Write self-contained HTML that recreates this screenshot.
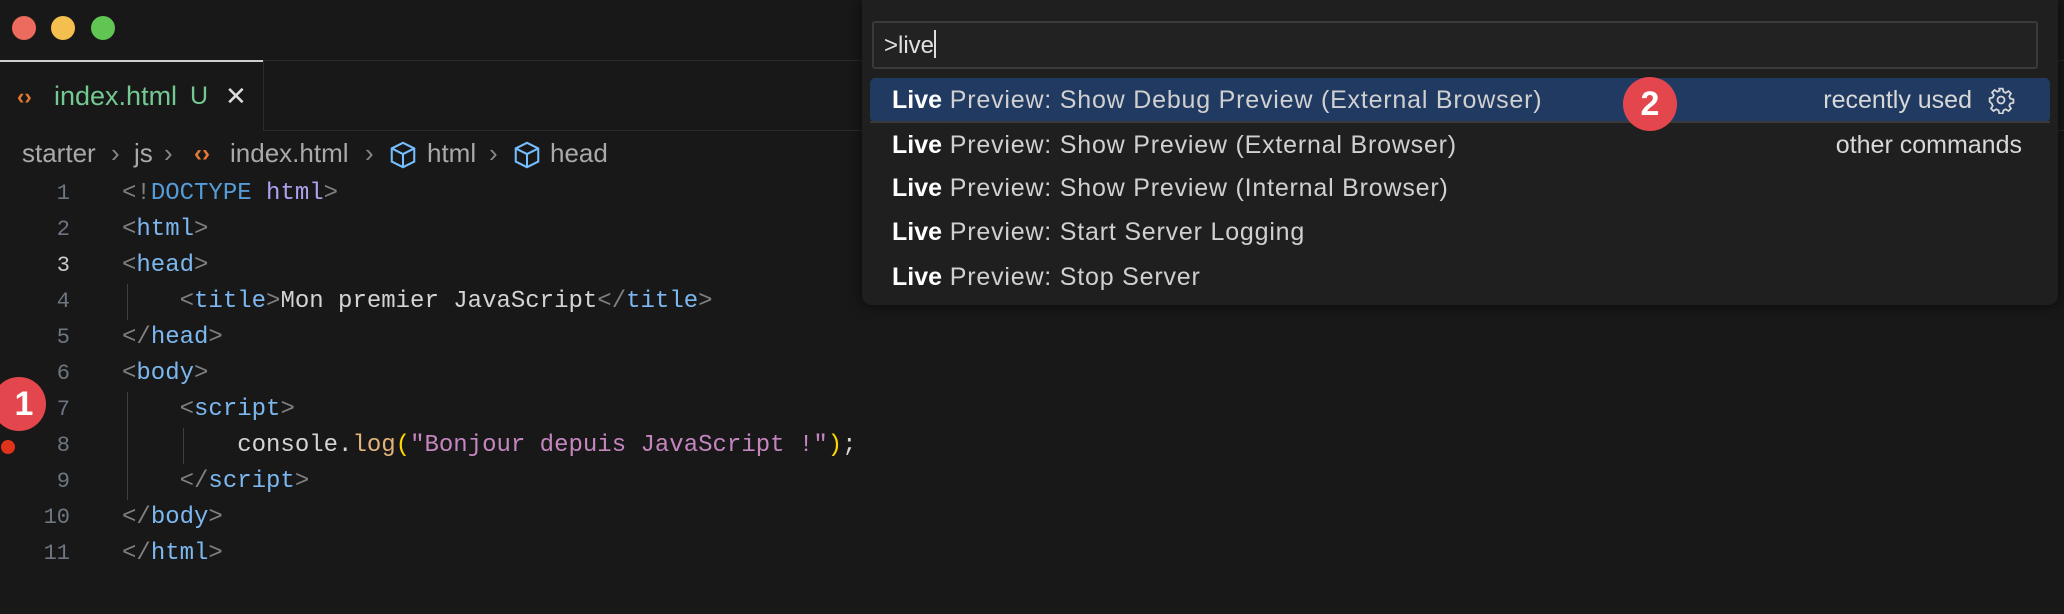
<!DOCTYPE html>
<html><head><style>
*{margin:0;padding:0;box-sizing:border-box}
body{width:2064px;height:614px;background:#181818;position:relative;overflow:hidden;font-family:"Liberation Sans",sans-serif;color:#ccc}
.a{position:absolute;white-space:pre}
.dot{position:absolute;width:24px;height:24px;border-radius:50%;top:16px}
.mono{font-family:"Liberation Mono",monospace;font-size:24px}
.ln{position:absolute;width:70px;text-align:right;color:#6e7681;font-family:"Liberation Mono",monospace;font-size:22px}
.t{color:#808080}.k{color:#569cd6}.tag{color:#7cb7f0}.v{color:#c586c0}.w{color:#d4d4d4}
.guide{position:absolute;width:1px;background:#404040}
.row{position:absolute;left:892px;font-size:25px;letter-spacing:0.8px;color:#d0d0d0}
.row b{color:#fff;letter-spacing:0}
.bc{position:absolute;top:138px;font-size:26px;color:#a9a9a9;white-space:pre}
.sep{color:#888}
</style></head><body>
<div class="dot" style="left:12px;background:#ed6a5e"></div>
<div class="dot" style="left:51px;background:#f5bf4f"></div>
<div class="dot" style="left:91px;background:#61c554"></div>

<div style="position:absolute;left:0;top:60px;width:2064px;height:1px;background:#2b2b2b"></div>
<div style="position:absolute;left:0;top:60px;width:263px;height:2px;background:#cfcfcf"></div>
<div style="position:absolute;left:263px;top:61px;width:1px;height:70px;background:#2b2b2b"></div>
<div style="position:absolute;left:264px;top:130px;width:1800px;height:1px;background:#2b2b2b"></div>
<div class="a" style="left:17px;top:84px;font-size:22px;color:#e37933;font-weight:bold">‹›</div>
<div class="a" style="left:54px;top:81px;font-size:27px;color:#73c991">index.html</div>
<div class="a" style="left:190px;top:82px;font-size:25px;color:#73c991">U</div>
<div class="a" style="left:225px;top:81px;font-size:26px;color:#ddd">✕</div>

<div class="bc" style="left:22px">starter</div>
<div class="bc sep" style="left:111px">›</div>
<div class="bc" style="left:134px">js</div>
<div class="bc sep" style="left:164px">›</div>
<div class="bc" style="left:194px;color:#e37933;font-weight:bold;font-size:24px;top:140px">‹›</div>
<div class="bc" style="left:230px">index.html</div>
<div class="bc sep" style="left:365px">›</div>
<div class="bc" style="left:427px">html</div>
<div class="bc sep" style="left:489px">›</div>
<div class="bc" style="left:550px">head</div>
<svg class="a" style="left:388px;top:140px" width="30" height="30" viewBox="0 0 16 16" fill="none" stroke="#75beff" stroke-width="1.1"><path d="M8 1.5l6 3v7l-6 3-6-3v-7z M2 4.5l6 3 6-3 M8 7.5v7"/></svg>
<svg class="a" style="left:512px;top:140px" width="30" height="30" viewBox="0 0 16 16" fill="none" stroke="#75beff" stroke-width="1.1"><path d="M8 1.5l6 3v7l-6 3-6-3v-7z M2 4.5l6 3 6-3 M8 7.5v7"/></svg>

<div class="ln" style="top:181px">1</div>
<div class="ln" style="top:217px">2</div>
<div class="ln" style="top:253px;color:#ccc">3</div>
<div class="ln" style="top:289px">4</div>
<div class="ln" style="top:325px">5</div>
<div class="ln" style="top:361px">6</div>
<div class="ln" style="top:397px">7</div>
<div class="ln" style="top:433px">8</div>
<div class="ln" style="top:469px">9</div>
<div class="ln" style="top:505px">10</div>
<div class="ln" style="top:541px">11</div>

<div class="guide" style="left:127px;top:284px;height:36px"></div>
<div class="guide" style="left:127px;top:392px;height:108px"></div>
<div class="guide" style="left:183px;top:428px;height:36px"></div>

<div class="a mono" style="left:122px;top:180px"><span class="t">&lt;!</span><span class="k">DOCTYPE</span> <span class="v" style="color:#b0a0f0">html</span><span class="t">&gt;</span></div>
<div class="a mono" style="left:122px;top:216px"><span class="t">&lt;</span><span class="tag">html</span><span class="t">&gt;</span></div>
<div class="a mono" style="left:122px;top:252px"><span class="t">&lt;</span><span class="tag">head</span><span class="t">&gt;</span></div>
<div class="a mono" style="left:122px;top:288px">    <span class="t">&lt;</span><span class="tag">title</span><span class="t">&gt;</span><span class="w">Mon premier JavaScript</span><span class="t">&lt;/</span><span class="tag">title</span><span class="t">&gt;</span></div>
<div class="a mono" style="left:122px;top:324px"><span class="t">&lt;/</span><span class="tag">head</span><span class="t">&gt;</span></div>
<div class="a mono" style="left:122px;top:360px"><span class="t">&lt;</span><span class="tag">body</span><span class="t">&gt;</span></div>
<div class="a mono" style="left:122px;top:396px">    <span class="t">&lt;</span><span class="tag">script</span><span class="t">&gt;</span></div>
<div class="a mono" style="left:122px;top:432px">        <span class="w">console.</span><span style="color:#e3b37a">log</span><span style="color:#ffd700">(</span><span class="v">"Bonjour depuis JavaScript !"</span><span style="color:#ffd700">)</span><span class="w">;</span></div>
<div class="a mono" style="left:122px;top:468px">    <span class="t">&lt;/</span><span class="tag">script</span><span class="t">&gt;</span></div>
<div class="a mono" style="left:122px;top:504px"><span class="t">&lt;/</span><span class="tag">body</span><span class="t">&gt;</span></div>
<div class="a mono" style="left:122px;top:540px"><span class="t">&lt;/</span><span class="tag">html</span><span class="t">&gt;</span></div>

<div style="position:absolute;left:1px;top:440px;width:14px;height:14px;border-radius:50%;background:#e0331c"></div>
<div style="position:absolute;left:-8px;top:377px;width:54px;height:54px;border-radius:50%;background:#e3474d;color:#fff;font-weight:bold;font-size:34px;text-align:center;line-height:54px;padding-left:10px">1</div>

<div style="position:absolute;left:862px;top:0;width:1196px;height:305px;background:#1f1f1f;border-radius:0 0 10px 10px;box-shadow:0 0 14px rgba(0,0,0,.6)"></div>
<div style="position:absolute;left:872px;top:21px;width:1166px;height:48px;background:#222;border:2px solid #3a3a3a;border-radius:3px"></div>
<div class="a" style="left:884px;top:30px;font-size:24px;color:#e0e0e0">&gt;live<span style="display:inline-block;width:2px;height:28px;background:#ddd;vertical-align:-5px"></span></div>
<div style="position:absolute;left:870px;top:78px;width:1180px;height:44px;background:#213a61;border-radius:5px"></div>
<div style="position:absolute;left:870px;top:121px;width:1180px;height:2px;background:#3a3a3a"></div>
<div class="row" style="top:86px"><b>Live</b> Preview: Show Debug Preview (External Browser)</div>
<div class="row" style="top:131px"><b>Live</b> Preview: Show Preview (External Browser)</div>
<div class="row" style="top:174px"><b>Live</b> Preview: Show Preview (Internal Browser)</div>
<div class="row" style="top:218px"><b>Live</b> Preview: Start Server Logging</div>
<div class="row" style="top:263px"><b>Live</b> Preview: Stop Server</div>
<div class="a" style="right:92px;top:86px;font-size:25px;color:#d8d8d8">recently used</div>
<div class="a" style="right:42px;top:131px;font-size:25px;color:#d8d8d8">other commands</div>
<svg class="a" style="left:1987px;top:86px" width="28" height="28" viewBox="0 0 16 16" fill="none" stroke="#d8d8d8" stroke-width="1"><path d="M7 1.5h2l.4 1.8 1.3.6 1.6-1 1.4 1.4-1 1.6.6 1.3 1.8.4v2l-1.8.4-.6 1.3 1 1.6-1.4 1.4-1.6-1-1.3.6-.4 1.8H7l-.4-1.8-1.3-.6-1.6 1-1.4-1.4 1-1.6-.6-1.3L1.5 9V7l1.8-.4.6-1.3-1-1.6 1.4-1.4 1.6 1 1.3-.6z"/><circle cx="8" cy="8" r="2"/></svg>
<div style="position:absolute;left:1623px;top:77px;width:54px;height:54px;border-radius:50%;background:#e3474d;color:#fff;font-weight:bold;font-size:34px;text-align:center;line-height:54px">2</div>
</body></html>
